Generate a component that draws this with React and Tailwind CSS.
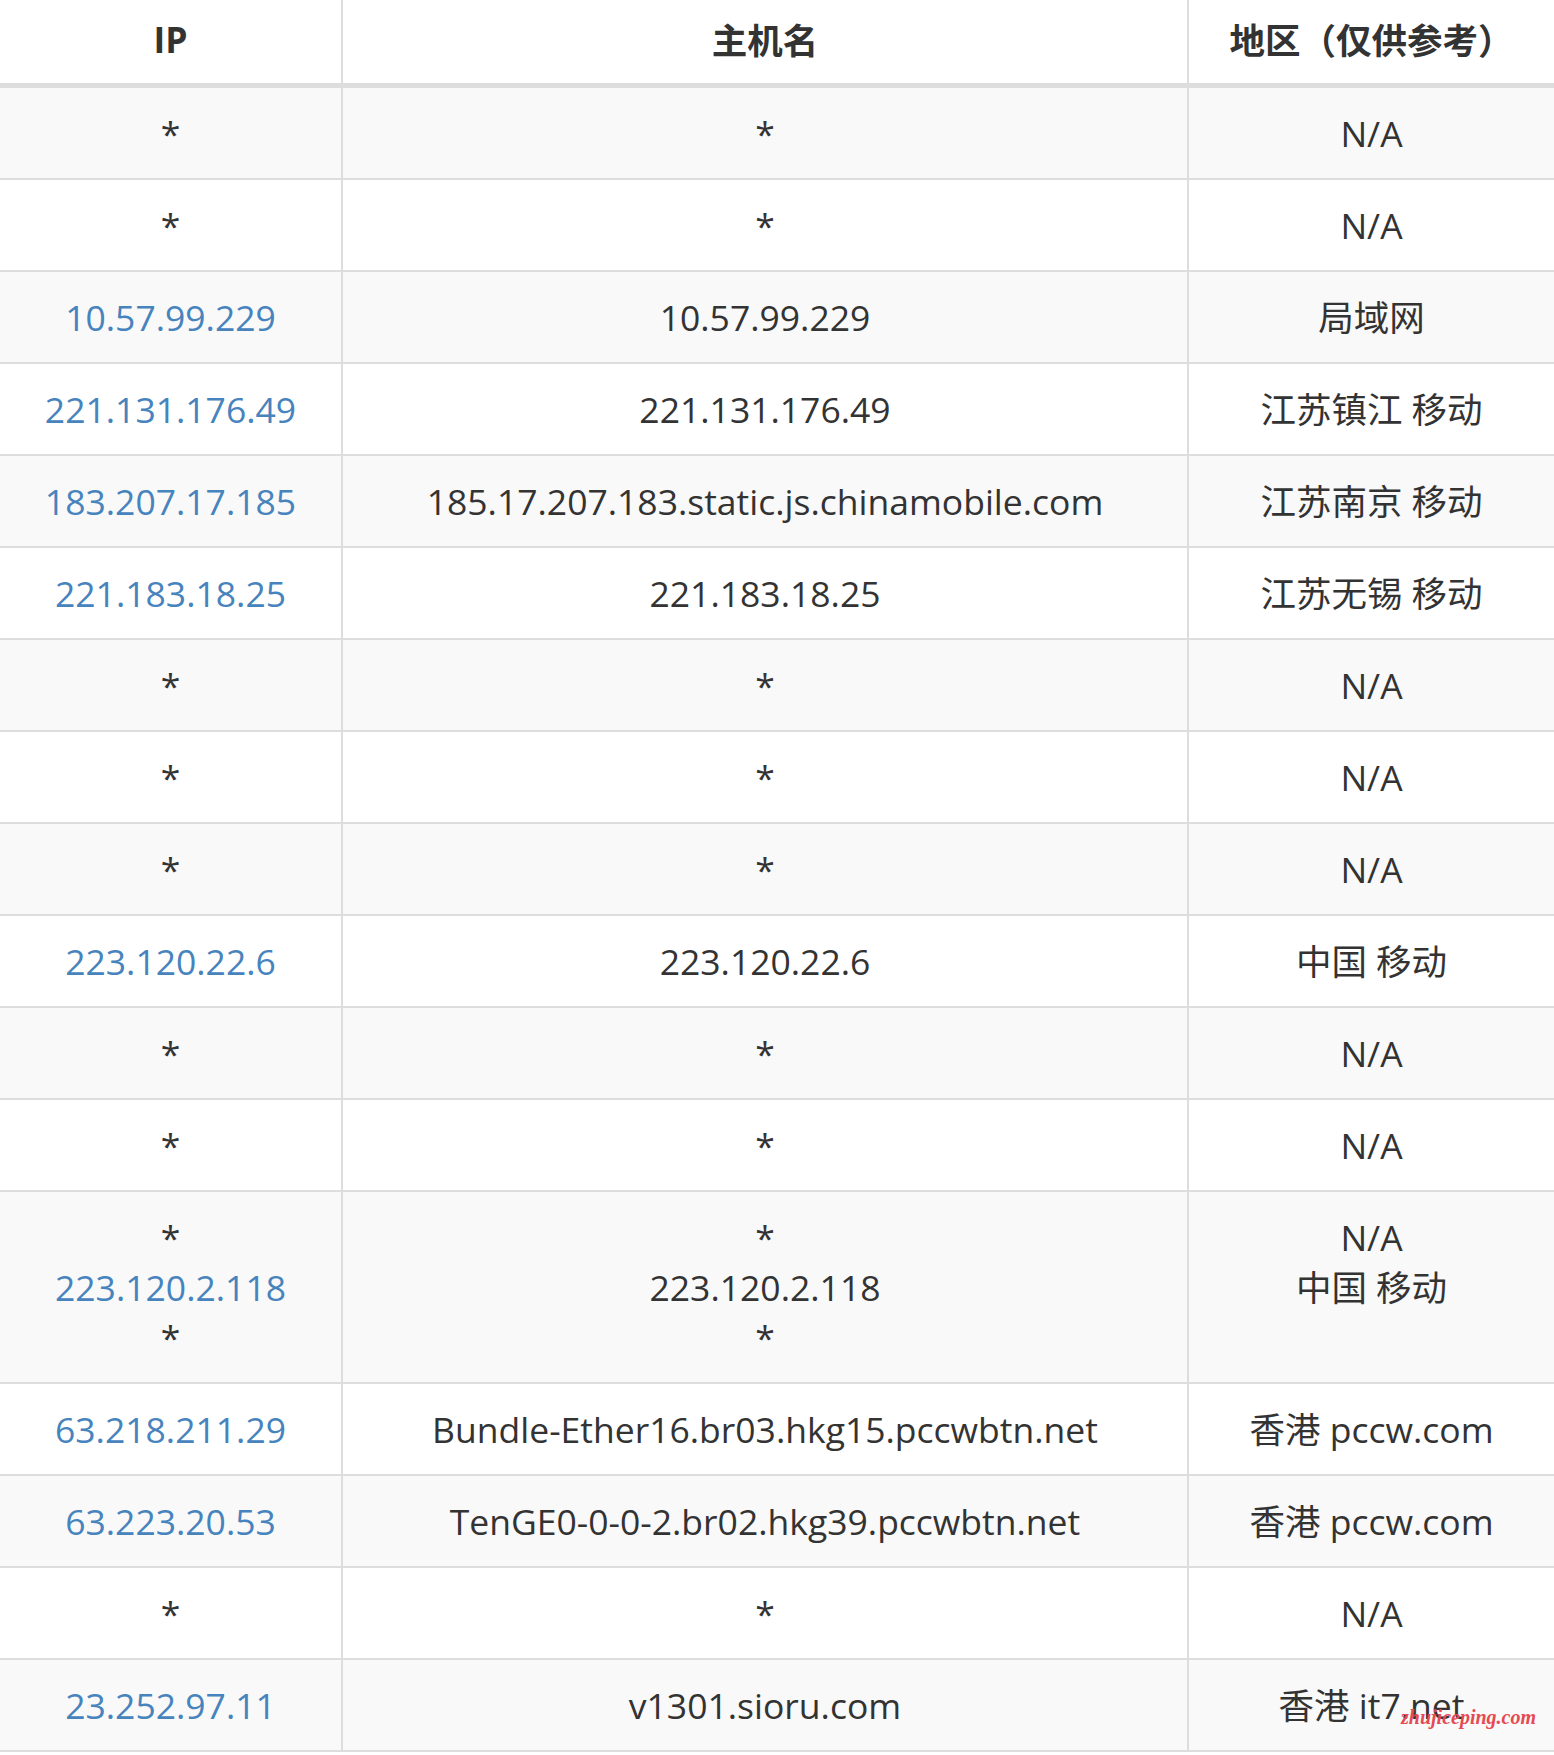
import React from 'react';

const rows = [
  { ip: ['*'], host: ['*'], area: ['N/A'] },
  { ip: ['*'], host: ['*'], area: ['N/A'] },
  { ip: ['10.57.99.229'], host: ['10.57.99.229'], area: ['局域网'] },
  { ip: ['221.131.176.49'], host: ['221.131.176.49'], area: ['江苏镇江 移动'] },
  { ip: ['183.207.17.185'], host: ['185.17.207.183.static.js.chinamobile.com'], area: ['江苏南京 移动'] },
  { ip: ['221.183.18.25'], host: ['221.183.18.25'], area: ['江苏无锡 移动'] },
  { ip: ['*'], host: ['*'], area: ['N/A'] },
  { ip: ['*'], host: ['*'], area: ['N/A'] },
  { ip: ['*'], host: ['*'], area: ['N/A'] },
  { ip: ['223.120.22.6'], host: ['223.120.22.6'], area: ['中国 移动'] },
  { ip: ['*'], host: ['*'], area: ['N/A'] },
  { ip: ['*'], host: ['*'], area: ['N/A'] },
  { ip: ['*', '223.120.2.118', '*'], host: ['*', '223.120.2.118', '*'], area: ['N/A', '中国 移动', '\u00a0'] },
  { ip: ['63.218.211.29'], host: ['Bundle-Ether16.br03.hkg15.pccwbtn.net'], area: ['香港 pccw.com'] },
  { ip: ['63.223.20.53'], host: ['TenGE0-0-0-2.br02.hkg39.pccwbtn.net'], area: ['香港 pccw.com'] },
  { ip: ['*'], host: ['*'], area: ['N/A'] },
  { ip: ['23.252.97.11'], host: ['v1301.sioru.com'], area: ['香港 it7.net'] },
];

function Lines({ items, link }) {
  return items.map((t, i) => (
    <div key={i} className={t !== '*' && link ? 'text-[#4783bd]' : ''}>
      {t}
    </div>
  ));
}

export default function App() {
  return (
    <div className="relative w-[1554px] h-[1755px] bg-white text-[#333] font-['Open_Sans','Noto_Sans_CJK_SC',sans-serif]">
      <table className="w-full table-fixed border-separate border-spacing-0">
        <thead>
          <tr>
            <th className="w-[343px] pt-[14px] pb-[19px] leading-[50px] border-r-2 border-b-[5px] border-[#ddd] text-[35.5px] font-bold text-center">IP</th>
            <th className="w-[846px] pt-[14px] pb-[19px] leading-[50px] border-r-2 border-b-[5px] border-[#ddd] text-[35.5px] font-bold text-center font-['Noto_Sans_CJK_SC',sans-serif]">主机名</th>
            <th className="pt-[14px] pb-[19px] leading-[50px] border-b-[5px] border-[#ddd] text-[35.5px] font-bold text-center font-['Noto_Sans_CJK_SC',sans-serif]">地区（仅供参考）</th>
          </tr>
        </thead>
        <tbody className="text-[35.5px] leading-[50px]">
          {rows.map((r, i) => (
            <tr key={i} className={i % 2 === 0 ? 'bg-[#f9f9f9]' : 'bg-white'}>
              <td className="py-[20px] border-r-2 border-b-2 border-[#ddd] text-center align-middle">
                <Lines items={r.ip} link />
              </td>
              <td className="py-[20px] border-r-2 border-b-2 border-[#ddd] text-center align-middle">
                <Lines items={r.host} />
              </td>
              <td className="py-[20px] border-b-2 border-[#ddd] text-center align-middle">
                <Lines items={r.area} />
              </td>
            </tr>
          ))}
        </tbody>
      </table>
      <div className="absolute left-[1401px] top-[1707px] text-[20px] leading-none italic font-bold text-[#e64a52] font-['Liberation_Serif',serif]">
        zhujiceping.com
      </div>
    </div>
  );
}
